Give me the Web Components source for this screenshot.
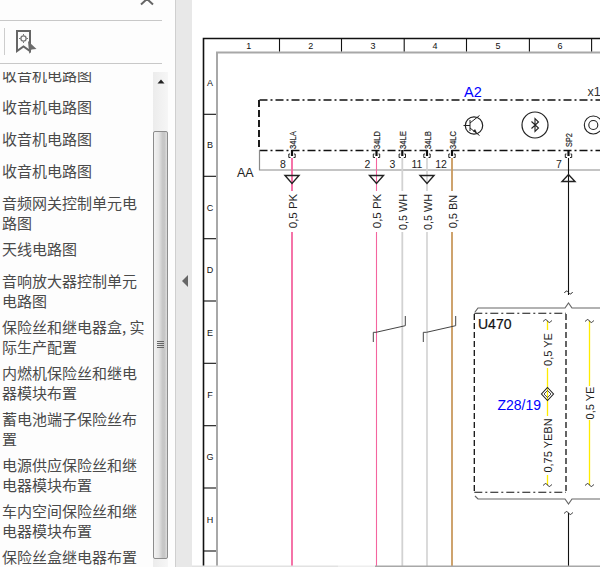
<!DOCTYPE html>
<html lang="zh">
<head>
<meta charset="utf-8">
<title>Wiring diagram</title>
<style>
  html, body { margin: 0; height: 100%; overflow: hidden; background: #fff; }
</style>
</head>
<body>
<viewer-shell>
  <bookmark-panel slot="side">
    <bookmark-item>收音机电路图</bookmark-item>
    <bookmark-item>收音机电路图</bookmark-item>
    <bookmark-item>收音机电路图</bookmark-item>
    <bookmark-item>收音机电路图</bookmark-item>
    <bookmark-item>音频网关控制单元电路图</bookmark-item>
    <bookmark-item>天线电路图</bookmark-item>
    <bookmark-item>音响放大器控制单元电路图</bookmark-item>
    <bookmark-item>保险丝和继电器盒, 实际生产配置</bookmark-item>
    <bookmark-item>内燃机保险丝和继电器模块布置</bookmark-item>
    <bookmark-item>蓄电池端子保险丝布置</bookmark-item>
    <bookmark-item>电源供应保险丝和继电器模块布置</bookmark-item>
    <bookmark-item>车内空间保险丝和继电器模块布置</bookmark-item>
    <bookmark-item>保险丝盒继电器布置</bookmark-item>
  </bookmark-panel>
  <wiring-page slot="page"></wiring-page>
</viewer-shell>

<script>
class ViewerShell extends HTMLElement {
  connectedCallback() {
    this.shadow = this.attachShadow({ mode: "open" });
    this.shadow.innerHTML = `
      <style>
        :host {
          display: flex;
          width: 600px;
          height: 567px;
          overflow: hidden;
        }
        .gutter {
          flex: 0 0 16px;
          display: flex;
          align-items: center;
          justify-content: center;
          background: #e8e8e8;
          height: 100%;
        }
        .gutter svg { display: block; margin-top: -6px; margin-left: 2px; }
        ::slotted([slot="page"]) { flex: 1; }
      </style>
      <slot name="side"></slot>
      <div class="gutter">
        <svg width="8" height="14" viewBox="0 0 8 14"><path d="M7 1V13L1 7Z" fill="#666"/></svg>
      </div>
      <slot name="page"></slot>
    `;
  }
}

class BookmarkPanel extends HTMLElement {
  connectedCallback() {
    this.shadow = this.attachShadow({ mode: "open" });
    this.shadow.innerHTML = `
      <style>
        :host {
          display: flex;
          flex-direction: column;
          flex: 0 0 176px;
          box-sizing: border-box;
          height: 567px;
          background: #fdfdfd;
          border-right: 1px solid #cfcfcf;
          font-family: "Noto Sans CJK SC", sans-serif;
        }
        .close {
          flex: 0 0 20px;
          margin-right: 13px;
          border-bottom: 1.5px solid #c8c8c8;
          display: flex;
          justify-content: flex-end;
        }
        .close svg { display: block; margin-right: 8px; }
        .tools {
          flex: 0 0 43px;
          margin-right: 13px;
          box-sizing: border-box;
          border-bottom: 1.5px solid #c8c8c8;
          display: flex;
          align-items: flex-start;
          gap: 11px;
          padding: 7px 0 0 4px;
        }
        .sep { width: 1px; height: 27px; background: #cdcdcd; }
        .tools svg { display: block; margin-top: 2px; }
        .body {
          flex: 1;
          min-height: 0;
          display: flex;
          margin-top: 7.5px;
        }
        .list {
          flex: 0 0 153px;
          box-sizing: border-box;
          overflow: hidden;
          padding: 0 2px;
        }
        .inner { margin-top: -13px; }
        .scroll {
          flex: 0 0 15px;
          display: flex;
          flex-direction: column;
          background: linear-gradient(90deg, #ececec, #f6f6f6);
        }
        .up {
          flex: 0 0 59px;
          display: flex;
          justify-content: center;
          padding-top: 7px;
          box-sizing: border-box;
        }
        .thumb {
          flex: 0 0 428px;
          box-sizing: border-box;
          width: 15px;
          border: 1px solid #8c8c8c;
          border-radius: 2px;
          background: linear-gradient(90deg, #f2f2f2 0, #e6e6e6 35%, #c8c8c8 65%, #c6c6c6 80%, #dedede 100%);
          display: flex;
          flex-direction: column;
          align-items: center;
          justify-content: center;
          gap: 1px;
        }
        .thumb i { display: block; width: 7px; height: 1px; background: #666; }
      </style>
      <div class="close">
        <svg width="14" height="6" viewBox="0 0 14 6"><path d="M1 4.5L7 -1L13 4.5" fill="none" stroke="#666" stroke-width="2"/></svg>
      </div>
      <div class="tools">
        <div class="sep"></div>
        <svg width="22" height="25" viewBox="0 0 22 25">
          <path d="M1 1H14V21L7.5 16.5L1 21Z" fill="none" stroke="#666" stroke-width="2"/>
          <circle cx="7.5" cy="8.5" r="2.6" fill="none" stroke="#777" stroke-width="1.3"/>
          <path d="M7.5 4V5.5M7.5 11.5V13M3 8.5H4.5M10.5 8.5H12" stroke="#777"/>
          <path d="M12 11L20.5 19L15.5 19.5L13.2 24Z" fill="#6c6c6c"/>
        </svg>
      </div>
      <div class="body">
        <div class="list"><div class="inner"><slot></slot></div></div>
        <div class="scroll">
          <div class="up">
            <svg width="8" height="5" viewBox="0 0 8 5"><path d="M4 0.5L7.5 4.5H0.5Z" fill="#222"/></svg>
          </div>
          <div class="thumb"><i></i><i></i><i></i><i></i></div>
        </div>
      </div>
    `;
  }
}

class BookmarkItem extends HTMLElement {
  connectedCallback() {
    this.shadow = this.attachShadow({ mode: "open" });
    this.shadow.innerHTML = `
      <style>
        :host {
          display: block;
          box-sizing: border-box;
          min-height: 32px;
          padding-top: 6px;
          font-size: 15px;
          line-height: 20px;
          color: #4a4a4a;
        }
      </style>
      <slot></slot>
    `;
  }
}

class WiringPage extends HTMLElement {
  connectedCallback() {
    this.shadow = this.attachShadow({ mode: "open" });
    this.shadow.innerHTML = `
      <style>
        :host { display: block; height: 567px; background: #fff; }
        svg { display: block; }
        text { font-family: "Liberation Sans", Arial, sans-serif; }
      </style>
      <svg width="408" height="567" viewBox="192 0 408 567">${this.drawing()}</svg>
    `;
  }

  vtext(x, y, str, size, fill = "#222", extra = "") {
    return `<text transform="translate(${x} ${y}) rotate(-90)" font-size="${size}" fill="${fill}" text-anchor="middle" dominant-baseline="central" ${extra}>${str}</text>`;
  }

  squiggle(x, y) {
    return `<path d="M${x - 4} ${y + 0.5}C${x - 2.5} ${y - 2.5} ${x - 1} ${y - 1.5} ${x} ${y}S${x + 2.5} ${y + 2.5} ${x + 4} ${y - 0.5}" fill="none" stroke="#222" stroke-width="1"/>`;
  }

  frame() {
    let out = `
      <path d="M203.5 567V38.5H600" fill="none" stroke="#111" stroke-width="1.6"/>
      <path d="M217 567V52.5H600" fill="none" stroke="#a8a8a8" stroke-width="2"/>`;
    [279.5, 341.5, 404.2, 466.5, 529.4, 591.6].forEach(x => {
      out += `<path d="M${x} 38.5V51.5" stroke="#111" stroke-width="1.1"/>`;
    });
    [248.7, 310.7, 373, 435, 498, 560].forEach((x, i) => {
      out += `<text x="${x}" y="48.5" font-size="9" fill="#111" text-anchor="middle">${i + 1}</text>`;
    });
    [114.3, 176.3, 238.7, 301, 363.3, 425.7, 488, 551].forEach(y => {
      out += `<path d="M204 ${y}H216" stroke="#111" stroke-width="1.1"/>`;
    });
    "ABCDEFGH".split("").forEach((c, i) => {
      out += `<text x="210" y="${86 + i * 62.4}" font-size="9" fill="#111" text-anchor="middle">${c}</text>`;
    });
    return out;
  }

  module() {
    return `
      <path d="M259.5 100H600" fill="none" stroke="#111" stroke-width="1.7" stroke-dasharray="8 3 2 3"/>
      <path d="M259 100V150" fill="none" stroke="#111" stroke-width="1.9" stroke-dasharray="7 3"/>
      <path d="M259.5 150.5H600" fill="none" stroke="#111" stroke-width="1.4" stroke-dasharray="8 3 2 3"/>
      <path d="M259.5 150V170H600" fill="none" stroke="#8a8a8a" stroke-width="1.2"/>
      <text x="464" y="97" font-size="14.5" fill="#0000ff">A2</text>
      <text x="587.5" y="96" font-size="12.5" fill="#333">x1</text>
      <text x="237" y="177" font-size="12.5" fill="#222">AA</text>

      <circle cx="474" cy="125.5" r="8.7" fill="none" stroke="#222" stroke-width="1.2"/>
      <path d="M463.5 125.5H470M470 120V131M470 123L479.5 115.5M470 128L479.5 135.5" fill="none" stroke="#222" stroke-width="1"/>
      <path d="M477 133L473 131.5L475 129Z" fill="#222"/>

      <circle cx="535" cy="125" r="13" fill="none" stroke="#222" stroke-width="1.2"/>
      <path d="M531.5 121.5L538.5 128L535 131.5V118.5L538.5 122L531.5 128.5" fill="none" stroke="#222" stroke-width="1.1"/>

      <circle cx="593.3" cy="125" r="9" fill="none" stroke="#222" stroke-width="1.1"/>
      <circle cx="593.3" cy="125" r="4.5" fill="none" stroke="#222" stroke-width="1.1"/>
    `;
  }

  pins() {
    const pins = [
      { x: 292, code: "34LA", num: "8", nx: 283, color: "#f4659f", w: 1.8, gauge: "0,5 PK", size: 11.5, gy: 211, tri: 1 },
      { x: 376.5, code: "34LD", num: "2", nx: 367.5, color: "#f4659f", w: 1.1, gauge: "0,5 PK", size: 11.5, gy: 211, tri: 1 },
      { x: 402.3, code: "34LE", num: "3", nx: 392.5, color: "#d2d2d2", w: 1.8, gauge: "0,5 WH", size: 10.8, gy: 212 },
      { x: 427, code: "34LB", num: "11", nx: 417, color: "#d2d2d2", w: 1.6, gauge: "0,5 WH", size: 10.8, gy: 212, tri: 1 },
      { x: 452, code: "34LC", num: "12", nx: 441, color: "#c99a5e", w: 1.8, gauge: "0,5 BN", size: 11, gy: 211.5 },
    ];
    let out = "";
    pins.forEach(p => {
      out += `
        <path d="M${p.x} 158V191M${p.x} 232V566" stroke="${p.color}" stroke-width="${p.w}"/>
        ${this.vtext(p.x + 0.5, p.gy, p.gauge, p.size)}`;
      if (p.tri) out += `<path d="M${p.x - 7} 175.5H${p.x + 7}L${p.x} 183.5Z" fill="none" stroke="#222" stroke-width="1.4"/>`;
      out += this.pinHead(p.x, p.code, p.num, p.nx);
    });
    // the one wire that leaves upward
    out += `
      <path d="M568.5 158V295" stroke="#111" stroke-width="1.1"/>
      <path d="M562 181.5H575L568.5 174.5Z" fill="none" stroke="#222" stroke-width="1.4"/>
      ${this.pinHead(568.5, "SP2", "7", 559)}
      ${this.squiggle(568.5, 292.5)}
      <path d="M568.5 513V567" stroke="#111" stroke-width="1.1"/>
      ${this.squiggle(568.5, 513)}`;
    return out;
  }

  pinHead(x, code, num, nx) {
    const len = code.length == 3 ? 14 : 18;
    return `
      <path d="M${x} 150V156" stroke="#111" stroke-width="2.2"/>
      <path d="M${x - 2} 154H${x - 3.2}V157.5H${x - 1.5}M${x + 2} 154H${x + 3.2}V157.5H${x + 1.5}" fill="none" stroke="#222" stroke-width="1"/>
      ${this.vtext(x, 140, code, 9.5, "#222", `stroke="#333" stroke-width="0.2" textLength="${len}" lengthAdjust="spacingAndGlyphs"`)}
      <text x="${nx}" y="167.5" font-size="10.5" fill="#222" text-anchor="middle">${num}</text>`;
  }

  breaks() {
    return `
      <path d="M373.3 342V332.3H376L405.3 325.7V316" fill="none" stroke="#444" stroke-width="1"/>
      <path d="M423.3 342V332.3H426.5L455.7 325.7V316" fill="none" stroke="#444" stroke-width="1"/>
    `;
  }

  harness() {
    return `
      <path d="M475 312L478 308H565L568.5 303L572 308H600" fill="none" stroke="#666" stroke-width="1.2"/>
      <path d="M475 496L478 499H565L568.5 504L572 499H600" fill="none" stroke="#666" stroke-width="1.2"/>
      <path d="M474.3 313.3H566" fill="none" stroke="#111" stroke-width="1.1" stroke-dasharray="8 3 2 3"/>
      <path d="M474.3 492.3H566" fill="none" stroke="#111" stroke-width="1.1" stroke-dasharray="8 3 2 3"/>
      <path d="M474.3 314V492" fill="none" stroke="#111" stroke-width="1.3" stroke-dasharray="6 3"/>
      <path d="M566 314V492" fill="none" stroke="#111" stroke-width="1.3" stroke-dasharray="6 3"/>
      <text x="478" y="329" font-size="14" fill="#111" stroke="#111" stroke-width="0.2">U470</text>

      <path d="M547.5 321V330M547.5 368V416M547.5 475V485" stroke="#ffec00" stroke-width="1.3"/>
      ${this.squiggle(547.5, 321)}
      ${this.squiggle(547.5, 485)}
      ${this.vtext(547.5, 349.5, "0,5 YE", 11)}
      ${this.vtext(547.5, 445.5, "0,75 YEBN", 11)}
      <path d="M547.5 387.5L553.5 394L547.5 400.5L541.5 394Z" fill="none" stroke="#222" stroke-width="1.1"/>
      <path d="M547.5 390.5L551 394L547.5 397.5L544 394Z" fill="none" stroke="#222" stroke-width="0.8"/>
      <text x="497.5" y="410" font-size="14" fill="#0000ff">Z28/19</text>

      <path d="M589.5 321V386M589.5 420V485" stroke="#ffec00" stroke-width="1.3"/>
      ${this.squiggle(589.5, 321)}
      ${this.squiggle(589.5, 485)}
      ${this.vtext(589.5, 403, "0,5 YE", 11)}
    `;
  }

  drawing() {
    return `
      ${this.frame()}
      ${this.module()}
      ${this.pins()}
      ${this.breaks()}
      ${this.harness()}
      <rect x="192" y="565.5" width="146" height="1.5" fill="#e2e2e2"/>
      <rect x="338" y="565.5" width="37" height="1.5" fill="#eeeeee"/>
      <rect x="375" y="565.5" width="225" height="1.5" fill="#a8a8a8"/>
    `;
  }
}

customElements.define('viewer-shell', ViewerShell);
customElements.define('bookmark-panel', BookmarkPanel);
customElements.define('bookmark-item', BookmarkItem);
customElements.define('wiring-page', WiringPage);
</script>
</body>
</html>
